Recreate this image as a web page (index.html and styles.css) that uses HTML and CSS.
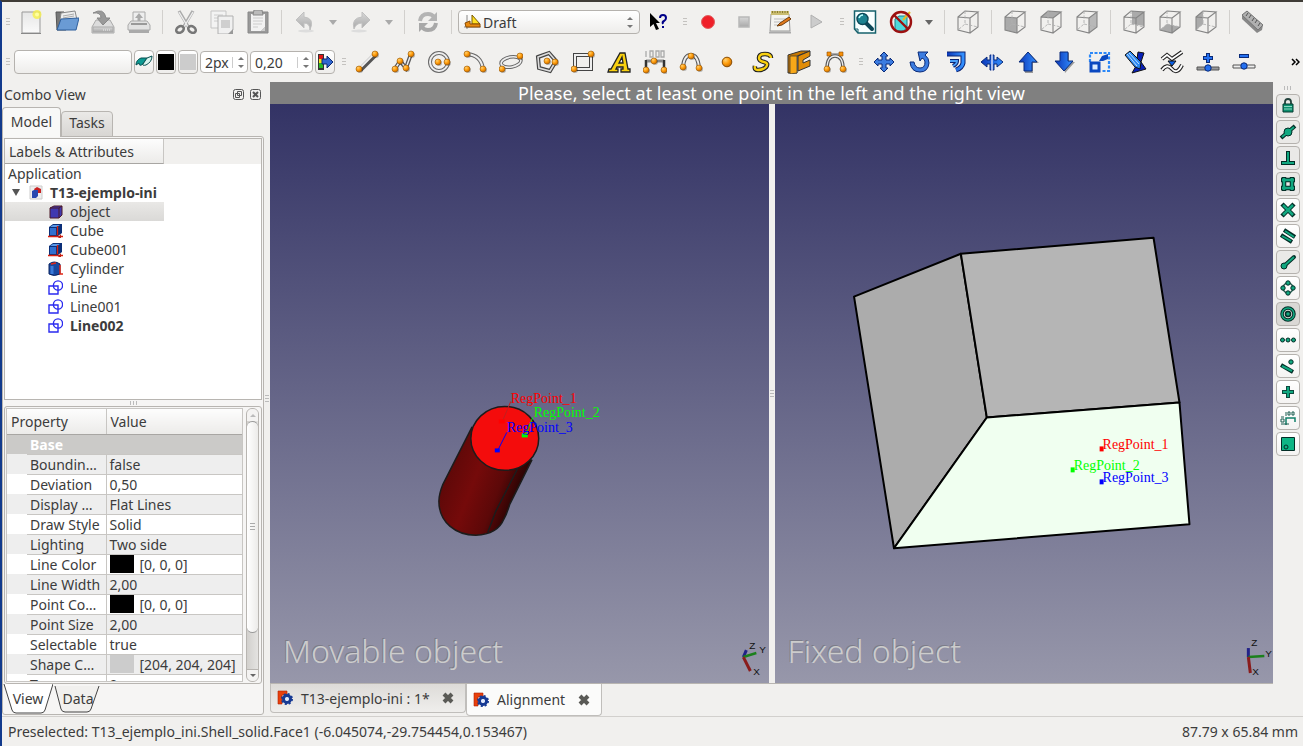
FILE: index.html
```html
<!DOCTYPE html>
<html lang="en">
<head>
<meta charset="utf-8">
<title>Alignment</title>
<link rel="stylesheet" href="styles.css">
</head>
<body>
<svg class="defs" aria-hidden="true">
  <defs>
    <radialGradient id="orange" cx=".35" cy=".3" r=".8"><stop offset="0" stop-color="#ffd070"/><stop offset=".5" stop-color="#ff9b08"/><stop offset="1" stop-color="#b86000"/></radialGradient>
    <linearGradient id="blue" x1="0" x2="1"><stop offset="0" stop-color="#0a35b8"/><stop offset="1" stop-color="#3390ff"/></linearGradient>
    <linearGradient id="grey" x1="0" x2="0" y1="0" y2="1"><stop offset="0" stop-color="#d8d8d8"/><stop offset="1" stop-color="#a8a8a8"/></linearGradient>
    <linearGradient id="paper" x1="0" x2="0" y1="0" y2="1"><stop offset="0" stop-color="#e6e6e6"/><stop offset="1" stop-color="#fafafa"/></linearGradient>
    <linearGradient id="side" x1="0" x2="1" y1="0" y2=".45"><stop offset="0" stop-color="#3a0505"/><stop offset=".2" stop-color="#5c0808"/><stop offset=".5" stop-color="#750a0a"/><stop offset=".75" stop-color="#5c0808"/><stop offset="1" stop-color="#180202"/></linearGradient>
    <g id="ball"><circle cx="1" cy="1" r="3" fill="#000" opacity=".25"/><circle r="3" fill="url(#orange)" stroke="#9a5a08" stroke-width=".6"/></g>
    <g id="wire" fill="none" stroke="#858585" stroke-width="1.1"><path d="M2 7 14 8V23L2 20ZM2 7 9 1 22 2 14 8M22 2V17L14 23"/><path d="M9 1V14L2 20M9 14 22 17" stroke-dasharray="3 1.500" stroke="#b0b0b0" stroke-width=".9"/></g>
    <g id="sketch" fill="none" stroke="#2a2af0" stroke-width="1.4"><path d="M1 6H10V14H1Z"/><circle cx="10" cy="5.500" r="4.600"/></g>
    <g id="cubeicon"><path d="M1 4 5 1H14V10L10 13H1Z" fill="#0b2f78"/><path d="M2 5H8V12H2Z" fill="#3070d0"/><path d="M2 4 5 2H12L9 4Z" fill="#5a98e8"/><path d="M9.500 3V12M0 13.500H15" stroke="#d82010" stroke-width="1.300"/><path d="M13 11V15H10Z" fill="#c02010"/></g>
    <g id="closex"><path d="M2 2 10 10M10 2 2 10" stroke="#5a5a56" stroke-width="4"/></g>
    <g id="fc"><path d="M1 1H10V5H5V14H1Z" fill="#e8400c" stroke="#b02000" stroke-width=".6"/><circle cx="10" cy="9" r="3.500" fill="none" stroke="#173a94" stroke-width="3"/><circle cx="10" cy="9" r="5" fill="none" stroke="#173a94" stroke-width="2" stroke-dasharray="2 1.930"/><circle cx="10" cy="9" r="1.700" fill="#dfe8ff"/></g>
  </defs>
</svg>

<div class="window">
  <div class="toolbar" role="toolbar" aria-label="Standard">
    <span class="grip first"></span>
    <button class="tool" aria-label="New"><svg viewBox="0 0 24 24"><path d="M3 2H21V23H3Z" fill="url(#paper)" stroke="#999"/><path d="M2 23.500H22" stroke="#888"/><circle cx="18" cy="4.500" r="4.500" fill="#f6f04a" opacity=".8"/><circle cx="18" cy="4.500" r="2" fill="#ffffa0"/></svg></button>
    <button class="tool" aria-label="Open"><svg viewBox="0 0 24 24"><path d="M1 2H9L11 4V20H2Z" fill="#777" stroke="#555"/><path d="M6 3 20 1 22 10H5Z" fill="#eee" stroke="#888"/><path d="M8 6 19 4M8 8 19 6" stroke="#aaa"/><path d="M6 9 24 8 21 20H2Z" fill="#6a9bd4" stroke="#2f5f9c"/></svg></button>
    <button class="tool" aria-label="Save"><svg viewBox="0 0 24 24"><path d="M5 10H19L23 17V23H1V17Z" fill="#dcdcdc" stroke="#aaa"/><path d="M2 17H22V22H2Z" fill="url(#grey)" stroke="#aaa"/><path d="M12 20H20" stroke="#eee" stroke-dasharray="1 1"/><path d="M2 3Q13-3 15 8H19L12 15 6 8H10Q10 2 2 3" fill="#999" stroke="#888"/></svg></button>
    <button class="tool" aria-label="Print"><svg viewBox="0 0 24 24"><path d="M6 2H18V12H6Z" fill="#eee" stroke="#aaa"/><path d="M12 3 16 8H13.500V12H10.500V8H8Z" fill="#aaa"/><path d="M4 11H20L23 15V20H1V15Z" fill="#e2e2e2" stroke="#aaa"/><path d="M4 14H20" stroke="#999" stroke-width="2"/><path d="M2 20H22V23H2Z" fill="#aaa"/></svg></button>
    <span class="sep"></span>
    <button class="tool" aria-label="Cut"><svg viewBox="0 0 24 24"><path d="M5 1 15 18M19 1 9 18" stroke="#aaa" stroke-width="3.200"/><path d="M5 2 14 17M19 2 10 17" stroke="#eee" stroke-width="1.400"/><ellipse cx="6" cy="19.500" rx="4" ry="3" fill="none" stroke="#777" stroke-width="2.600" transform="rotate(-35 6 19.500)"/><ellipse cx="18" cy="19.500" rx="4" ry="3" fill="none" stroke="#777" stroke-width="2.600" transform="rotate(35 18 19.500)"/></svg></button>
    <button class="tool" aria-label="Copy"><svg viewBox="0 0 24 24"><path d="M1 1H16V18H1Z" fill="#f3f3f3" stroke="#c5c5c5"/><path d="M4 5H13M4 8H13M4 11H8" stroke="#ccc"/><path d="M8 6H23V20L19 24H8Z" fill="#f0f0f0" stroke="#b0b0b0"/><path d="M11 10H20V18H11Z" fill="#cfcfcf"/><path d="M23 19V24H18Z" fill="#999"/></svg></button>
    <button class="tool" aria-label="Paste"><svg viewBox="0 0 24 24"><path d="M2 2H22V23H2Z" fill="#999" stroke="#888"/><path d="M5 4H19V17L15 21H5Z" fill="#f2f2f2"/><path d="M7 8H17M7 11H17M7 14H16M7 17H12" stroke="#ccc"/><path d="M8 0H16L17 5H7Z" fill="#bbb" stroke="#888"/><path d="M19 17V21H15Z" fill="#ccc"/></svg></button>
    <span class="sep"></span>
    <button class="tool" aria-label="Undo"><svg viewBox="0 0 24 24"><ellipse cx="13" cy="21" rx="8" ry="1.500" fill="#ddd"/><path d="M11 2V7Q22 8 17 20Q17 13 11 13V18L3 10Z" fill="url(#grey)" stroke="#c0c0c0"/></svg></button>
    <button class="drop" aria-label="Undo history"></button>
    <button class="tool" aria-label="Redo"><svg viewBox="0 0 24 24"><ellipse cx="10" cy="21" rx="8" ry="1.500" fill="#ddd"/><path d="M13 2V7Q2 8 5 19Q7 13 13 13V18L21 10Z" fill="url(#grey)" stroke="#c0c0c0"/></svg></button>
    <button class="drop" aria-label="Redo history"></button>
    <span class="sep"></span>
    <button class="tool" aria-label="Refresh"><svg viewBox="0 0 24 24"><path d="M4 11Q5 4 12 4Q16 4 18 7" fill="none" stroke="#b4b4b4" stroke-width="4"/><path d="M21 2V11H12Z" fill="#b4b4b4"/><path d="M20 13Q19 20 12 20Q8 20 6 17" fill="none" stroke="#a8a8a8" stroke-width="4"/><path d="M3 22V13H12Z" fill="#a8a8a8"/></svg></button>
    <span class="sep"></span>
    <div class="workbench">
      <svg viewBox="0 0 18 18"><path d="M3 2V16M0 14H17" stroke="#888"/><path d="M8 2V11H16Z" fill="#ffe020" stroke="#7a5a00"/><path d="M1 10 6 8V11H16V14H2Z" fill="#e88a10" stroke="#8a4a00"/></svg>
      <select aria-label="Workbench"><option>Draft</option></select>
      <span class="updown"></span>
    </div>
    <button class="tool" aria-label="What's this"><svg viewBox="0 0 24 24"><path d="M3 3V17L6.500 14 9 20 12 19 9 13H13Z" fill="#000"/><path d="M13 8Q13 5 16 5T19 8Q19 10 17 11T16 14M16 16V18" fill="none" stroke="#000088" stroke-width="2"/></svg></button>
    <span class="grip"></span>
    <button class="tool" aria-label="Record macro"><svg viewBox="0 0 24 24"><circle cx="12" cy="12" r="6.500" fill="#ef2029" stroke="#e06060"/></svg></button>
    <button class="tool" aria-label="Stop macro"><svg viewBox="0 0 24 24"><path d="M7 7H17V17H7Z" fill="url(#grey)" stroke="#b8b8b8" stroke-width="1.500"/></svg></button>
    <button class="tool" aria-label="Macros"><svg viewBox="0 0 24 24"><path d="M3 4H21L22 21H2Z" fill="#f4f4f0" stroke="#999"/><path d="M3 1H21V5H3Z" fill="#c9bc70"/><path d="M4 2H21" stroke="#8a7c30" stroke-dasharray="1 1.500" stroke-width="2"/><path d="M6 9H18M6 12H14M6 15H10" stroke="#bbb"/><path d="M23 9 14 15 9 16 12 13 21 7Z" fill="#e07818" stroke="#704010"/><path d="M1 22.500H23" stroke="#aaa" stroke-width="2"/></svg></button>
    <button class="tool" aria-label="Run macro"><svg viewBox="0 0 24 24"><path d="M7 5 18 12 7 18Z" fill="#ccc" stroke="#b0b0b0"/></svg></button>
    <span class="grip"></span>
    <button class="tool" aria-label="Fit all"><svg viewBox="0 0 24 24"><path d="M1.500 1H22.500V23H5L1.500 19Z" fill="#f8ffff" stroke="#16616c" stroke-width="1.500"/><path d="M2 19H5V23" fill="none" stroke="#16616c"/><path d="M12 12 19 19" stroke="#0d4858" stroke-width="4" stroke-linecap="round"/><circle cx="9.500" cy="9" r="5.500" fill="#1c8290" stroke="#0d4858" stroke-width="1.400"/><path d="M6 8Q7 5 10 5" fill="none" stroke="#bff" stroke-width="1.500"/></svg></button>
    <button class="tool" aria-label="Draw style"><svg viewBox="0 0 24 24"><path d="M6 9 10 6H18V17L15 21H6Z" fill="#4fd8dc" stroke="#168088"/><path d="M14 10 21 2" stroke="#e8b820" stroke-width="2"/><circle cx="12" cy="12" r="10" fill="none" stroke="#9c1010" stroke-width="2.400"/><path d="M5 5 19 19" stroke="#9c1010" stroke-width="2.400"/></svg></button>
    <button class="drop dark" aria-label="Draw style options"></button>
    <span class="sep"></span>
    <button class="tool" aria-label="Axonometric"><svg viewBox="0 0 24 24"><use href="#wire"/></svg></button>
    <span class="sep"></span>
    <button class="tool" aria-label="Front"><svg viewBox="0 0 24 24"><path d="M2 7 14 8V23L2 20Z" fill="#aaa"/><use href="#wire"/></svg></button>
    <button class="tool" aria-label="Top"><svg viewBox="0 0 24 24"><path d="M2 7 9 1 22 2 14 8Z" fill="#aaa"/><use href="#wire"/></svg></button>
    <button class="tool" aria-label="Right"><svg viewBox="0 0 24 24"><path d="M14 8 22 2V17L14 23Z" fill="#b8b8b8"/><use href="#wire"/></svg></button>
    <span class="sep"></span>
    <button class="tool" aria-label="Rear"><svg viewBox="0 0 24 24"><path d="M10 1 22 2V16L10 14Z" fill="#aaa"/><use href="#wire"/></svg></button>
    <button class="tool" aria-label="Bottom"><svg viewBox="0 0 24 24"><path d="M2 20 9 14 22 17 14 23Z" fill="#aaa"/><use href="#wire"/></svg></button>
    <button class="tool" aria-label="Left"><svg viewBox="0 0 24 24"><path d="M2 7 9 1V14L2 20Z" fill="#aaa"/><use href="#wire"/></svg></button>
    <span class="sep"></span>
    <button class="tool" aria-label="Measure distance"><svg viewBox="0 0 24 24"><path d="M6 1 22 15 21 20 16 23 1 9 1 5Z" fill="#888"/><path d="M6 1 22 15 17 20 1 5Z" fill="#b0b0b0" stroke="#777"/><path d="M7 3 5 6M10 5 8 8M13 8 11 11M16 10 14 13M19 13 17 16" stroke="#555"/></svg></button>
  </div>

  <div class="toolbar" role="toolbar" aria-label="Draft">
    <span class="grip first"></span>
    <div class="fields">
      <button class="btn plane" aria-label="Working plane"></button>
      <button class="btn" aria-label="Construction mode"><svg viewBox="0 0 18 18"><path d="M1 12Q1 7 6 5H12L8 11Q4 14 4 10Z" fill="#0c9a92" stroke="#064f50"/><path d="M8 11 12 5 17 3Q17 9 11 12Q7 13 8 11" fill="#d8f4ee" stroke="#064f50"/></svg></button>
      <button class="btn" aria-label="Line color"><span class="chip black"></span></button>
      <button class="btn" aria-label="Face color"><span class="chip"></span></button>
      <div class="spin narrow"><input aria-label="Line width" value="2px"><span class="updown"></span></div>
      <div class="spin"><input aria-label="Text size" value="0,20"><span class="updown"></span></div>
      <button class="btn" aria-label="Apply style"><svg viewBox="0 0 18 18"><path d="M2 1H8V17H2Z" fill="#333"/><path d="M3 2H7V6H3Z" fill="#e01818"/><path d="M3 6H7V10H3Z" fill="#f4e020"/><path d="M3 10H7V15H3Z" fill="#28b828"/><path d="M6 6H11V3L17 9 11 15V11H6Z" fill="#2f66d0" stroke="#0a2870"/></svg></button>
    </div>
    <span class="grip"></span>
    <button class="tool" aria-label="Line"><svg viewBox="0 0 24 24"><path d="M5 20 20 5" stroke="#555" stroke-width="5"/><path d="M4 19 19 4" stroke="#eee" stroke-width="2"/><use href="#ball" x="4" y="19"/><use href="#ball" x="20" y="4"/></svg></button>
    <button class="tool" aria-label="Wire"><svg viewBox="0 0 24 24"><path d="M4 19 9 11 15 18 20 4" fill="none" stroke="#555" stroke-width="4"/><path d="M4 19 9 11 15 18 20 4" fill="none" stroke="#eee" stroke-width="1.500"/><use href="#ball" x="4" y="19"/><use href="#ball" x="9" y="11"/><use href="#ball" x="15" y="18"/><use href="#ball" x="20" y="4"/></svg></button>
    <button class="tool" aria-label="Circle"><svg viewBox="0 0 24 24"><circle cx="12" cy="12" r="9" fill="none" stroke="#666" stroke-width="4"/><circle cx="12" cy="12" r="9" fill="none" stroke="#eee" stroke-width="2"/><use href="#ball" x="11" y="12"/><use href="#ball" x="20" y="12"/></svg></button>
    <button class="tool" aria-label="Arc"><svg viewBox="0 0 24 24"><path d="M4 4Q18 5 20 19" fill="none" stroke="#666" stroke-width="4"/><path d="M4 4Q18 5 20 19" fill="none" stroke="#eee" stroke-width="2"/><use href="#ball" x="4" y="4"/><use href="#ball" x="4" y="19"/><use href="#ball" x="20" y="19"/></svg></button>
    <button class="tool" aria-label="Ellipse"><svg viewBox="0 0 24 24"><ellipse cx="12" cy="12" rx="10" ry="5" fill="none" stroke="#666" stroke-width="3.600" transform="rotate(-10 12 12)"/><ellipse cx="12" cy="12" rx="10" ry="5" fill="none" stroke="#eee" stroke-width="1.600" transform="rotate(-10 12 12)"/><use href="#ball" x="3" y="19"/><use href="#ball" x="21" y="6"/></svg></button>
    <button class="tool" aria-label="Polygon"><svg viewBox="0 0 24 24"><path d="M3 7 14 3 21 11 15 21 4 18Z" fill="none" stroke="#444" stroke-width="4"/><path d="M3 7 14 3 21 11 15 21 4 18Z" fill="none" stroke="#ddd" stroke-width="1.600"/><use href="#ball" x="12" y="11"/><use href="#ball" x="20" y="12"/></svg></button>
    <button class="tool" aria-label="Rectangle"><svg viewBox="0 0 24 24"><path d="M4 5H20V19H4Z" fill="none" stroke="#444" stroke-width="4"/><path d="M4 5H20V19H4Z" fill="none" stroke="#eee" stroke-width="2"/><use href="#ball" x="3" y="19"/><use href="#ball" x="20" y="4"/></svg></button>
    <button class="tool" aria-label="Text"><svg viewBox="0 0 24 24"><path d="M2 19H4L13 3H18L21 19H23V22H14V19H16V17H10L9 19H11V22H1Z M12 13H16L15 7Z" fill="#f8d010" fill-rule="evenodd" stroke="#222" stroke-width="1.300"/></svg></button>
    <button class="tool" aria-label="Dimension"><svg viewBox="0 0 24 24"><path d="M3 10V21M21 10V21M3 11H21" stroke="#333" stroke-width="2.500"/><path d="M4 11H20" stroke="#ddd"/><path d="M3 1V7M7 1H10V7H7ZM13 1H16V7H13ZM18 1H21V7H18Z" fill="none" stroke="#aaa" stroke-width="1.300"/><use href="#ball" x="3" y="20"/><use href="#ball" x="11" y="11"/><use href="#ball" x="21" y="20"/></svg></button>
    <button class="tool" aria-label="B-spline"><svg viewBox="0 0 24 24"><path d="M4 17Q5 5 12 5T20 18" fill="none" stroke="#555" stroke-width="4"/><path d="M4 17Q5 5 12 5T20 18" fill="none" stroke="#eee" stroke-width="1.800"/><use href="#ball" x="4" y="17"/><use href="#ball" x="12" y="6"/><use href="#ball" x="20" y="18"/></svg></button>
    <button class="tool" aria-label="Point"><svg viewBox="0 0 24 24"><circle cx="12" cy="12" r="4.800" fill="url(#orange)" stroke="#8a4c00"/></svg></button>
    <button class="tool" aria-label="Shape string"><svg viewBox="0 0 24 24"><path d="M20 8Q20 4 14 4Q8 4 8 8Q8 11 13 12Q18 13 15 17Q12 20 7 20Q3 20 4 16" fill="none" stroke="#222" stroke-width="4.600"/><path d="M20 8Q20 4 14 4Q8 4 8 8Q8 11 13 12Q18 13 15 17Q12 20 7 20Q3 20 4 16" fill="none" stroke="#f8d010" stroke-width="2.400"/></svg></button>
    <button class="tool" aria-label="Facebinder"><svg viewBox="0 0 24 24"><path d="M1 5 14 1 23 1 10 6V23L1 23Z" fill="#c87800" stroke="#333"/><path d="M11 6 23 1V6L16 10V13L23 10V16L11 21Z" fill="#e08c08" stroke="#333"/><path d="M3 6H10V23L3 24Z" fill="#f8a818" stroke="#333" stroke-width=".7"/></svg></button>
    <button class="tool" aria-label="Bezier curve"><svg viewBox="0 0 24 24"><path d="M4 19Q4 6 12 6T20 19" fill="none" stroke="#555" stroke-width="3.500"/><path d="M4 19Q4 6 12 6T20 19" fill="none" stroke="#eee" stroke-width="1.300"/><path d="M6 4H18" stroke="#666"/><path d="M4 2H8V6H4ZM16 2H20V6H16Z" fill="#f89008" stroke="#8a4c00" stroke-width=".6"/><use href="#ball" x="4" y="19"/><use href="#ball" x="20" y="19"/></svg></button>
    <span class="grip"></span>
    <button class="tool" aria-label="Move"><svg viewBox="0 0 24 24"><path d="M12 2 16 6H14V10H18V8L22 12 18 16V14H14V18H16L12 22 8 18H10V14H6V16L2 12 6 8V10H10V6H8Z" fill="#3c7ce0" stroke="#0a2a78"/></svg></button>
    <button class="tool" aria-label="Rotate"><svg viewBox="0 0 24 24"><path d="M2 12H6Q7 18 12 18Q17 18 17 12Q17 9 14 8L12 11 10 2H20L17 5Q21 8 21 13Q20 22 12 22Q3 22 2 12Z" fill="#3c7ce0" stroke="#0a2a78"/></svg></button>
    <button class="tool" aria-label="Offset"><svg viewBox="0 0 24 24"><path d="M3 4H19V13Q18 18 12 20" fill="none" stroke="#0a2270" stroke-width="5"/><path d="M3 4H19V13Q18 18 12 20" fill="none" stroke="url(#blue)" stroke-width="3"/><path d="M6 11H13Q13 14 9 16" fill="none" stroke="#0a2270" stroke-width="4"/><path d="M6 11H13Q13 14 9 16" fill="none" stroke="#4aa0f8" stroke-width="1.800"/></svg></button>
    <button class="tool" aria-label="Trimex"><svg viewBox="0 0 24 24"><path d="M1 12 7 7V10H10V5H14V10H17V7L23 12 17 17V14H14V20H10V14H7V17Z" fill="url(#blue)" stroke="#0a2a78"/><path d="M12 4V21" stroke="#eef" stroke-width="1.300"/></svg></button>
    <button class="tool" aria-label="Upgrade"><svg viewBox="0 0 24 24"><path d="M13 3 23 13H17V23H9V13Z" fill="#999"/><path d="M12 2 21 12H16V21H8V12H3Z" fill="url(#blue)" stroke="#0a2a78"/></svg></button>
    <button class="tool" aria-label="Downgrade"><svg viewBox="0 0 24 24"><path d="M9 3H17V12H23L13 23Z" fill="#999"/><path d="M8 2H16V11H21L12 21 3 11H8Z" fill="url(#blue)" stroke="#0a2a78"/></svg></button>
    <button class="tool" aria-label="Scale"><svg viewBox="0 0 24 24"><path d="M2 12V3H21V21H13" fill="none" stroke="#2c88f8" stroke-width="2.200" stroke-dasharray="3 1.500"/><path d="M3 13H11V21H3Z" fill="#dcecff" stroke="#0a48c0" stroke-width="3"/><path d="M11 11 14 6 20 4 20 9 15 11Z" fill="#0a48c0"/></svg></button>
    <button class="tool" aria-label="Edit"><svg viewBox="0 0 24 24"><path d="M14 2 20 3 17 12 22 19 8 23 12 16Z" fill="#0820b8" stroke="#111"/><path d="M1 5 6 1 17 12 16 19 11 17Z" fill="#2c88f0" stroke="#111"/><path d="M3 4 13 16M5 3 15 14" stroke="#bfe0ff"/></svg></button>
    <button class="tool" aria-label="Wire to B-spline"><svg viewBox="0 0 24 24"><path d="M2 9 7 5 12 9 22 2M2 20Q7 13 12 19T22 15" fill="none" stroke="#222" stroke-width="4"/><path d="M2 9 7 5 12 9 22 2M2 20Q7 13 12 19T22 15" fill="none" stroke="#fff" stroke-width="1.800"/><path d="M8 11H16L12 16Z" fill="#0a60e8" stroke="#111"/></svg></button>
    <button class="tool" aria-label="Add point"><svg viewBox="0 0 24 24"><path d="M12 3V13M7 8H17" stroke="#0a2a78" stroke-width="4"/><path d="M12 4V12M8 8H16" stroke="#2470f0" stroke-width="2"/><path d="M1 17H23V20H1Z" fill="#999" stroke="#555"/><circle cx="12" cy="18" r="3.200" fill="#2470f0" stroke="#0a2a78"/></svg></button>
    <button class="tool" aria-label="Delete point"><svg viewBox="0 0 24 24"><path d="M7 6H17" stroke="#0a2a78" stroke-width="4"/><path d="M8 6H16" stroke="#2470f0" stroke-width="2"/><path d="M1 15H23V18H1Z" fill="#eee" stroke="#555"/><circle cx="12" cy="16" r="3.200" fill="#2470f0" stroke="#0a2a78"/></svg></button>
    <button class="more" aria-label="More tools"><svg viewBox="0 0 9 8"><path d="M1 1 4 4 1 7M5 1 8 4 5 7" fill="none" stroke="#000" stroke-width="1.500"/></svg></button>
  </div>

  <div class="main">
    <aside class="dock">
      <header class="dock-title">
        <h2>Combo View</h2>
        <button aria-label="Float"><svg viewBox="0 0 11 11"><rect x=".5" y=".5" width="10" height="10" rx="2" fill="none" stroke="#555"/><path d="M4.500 2.500H8.500V6.500H4.500ZM2.500 4.500H6.500V8.500H2.500Z" fill="none" stroke="#555"/></svg></button>
        <button aria-label="Close"><svg viewBox="0 0 11 11"><rect x=".5" y=".5" width="10" height="10" rx="2" fill="none" stroke="#555"/><path d="M3 3 8 8M8 3 3 8" stroke="#555" stroke-width="2"/></svg></button>
      </header>
      <nav class="tabs">
        <button class="tab active">Model</button>
        <button class="tab">Tasks</button>
      </nav>
      <div class="pane">
        <div class="tree">
          <div class="tree-head"><span>Labels &amp; Attributes</span></div>
          <ul>
            <li class="root">Application</li>
            <li class="doc"><span class="expander"></span><svg viewBox="0 0 15 15"><path d="M2 1H14V14H2Z" fill="#eee" stroke="#ccc"/><path d="M6 4 9 2 13 4V8H8Z" fill="#c82020"/><path d="M4 6 6 5H10V11L8 13H4Z" fill="#2848b0"/></svg>T13-ejemplo-ini</li>
            <li class="selected"><svg viewBox="0 0 15 15"><path d="M2 4 6 2H14V11L11 14H2Z" fill="#4038b0" stroke="#4a1828"/><path d="M2 4H11L14 2M11 4V14" fill="none" stroke="#4a1828"/></svg>object</li>
            <li><svg viewBox="0 0 15 15"><use href="#cubeicon"/></svg>Cube</li>
            <li><svg viewBox="0 0 15 15"><use href="#cubeicon"/></svg>Cube001</li>
            <li><svg viewBox="0 0 15 15"><path d="M1 3Q6-1 12 3V13Q6 16 1 13Z" fill="#1848a0" stroke="#0a2460"/><path d="M4 5V13" stroke="#3a7ad8" stroke-width="3"/><path d="M3 3 8 2M12 4V13H15" fill="none" stroke="#e02818" stroke-width="1.500"/></svg>Cylinder</li>
            <li><svg viewBox="0 0 15 15"><use href="#sketch"/></svg>Line</li>
            <li><svg viewBox="0 0 15 15"><use href="#sketch"/></svg>Line001</li>
            <li class="bold"><svg viewBox="0 0 15 15"><use href="#sketch"/></svg>Line002</li>
          </ul>
        </div>
        <div class="hsplit"></div>
        <div class="props">
          <div class="props-clip">
            <table>
              <colgroup><col class="c-gutter"><col class="c-name"><col></colgroup>
              <thead><tr><th colspan="2">Property</th><th>Value</th></tr></thead>
              <tbody>
                <tr class="group"><td></td><td colspan="2">Base</td></tr>
                <tr><td></td><td>Boundin…</td><td>false</td></tr>
                <tr><td></td><td>Deviation</td><td>0,50</td></tr>
                <tr><td></td><td>Display …</td><td>Flat Lines</td></tr>
                <tr><td></td><td>Draw Style</td><td>Solid</td></tr>
                <tr><td></td><td>Lighting</td><td>Two side</td></tr>
                <tr><td></td><td>Line Color</td><td><i class="swatch black"></i>[0, 0, 0]</td></tr>
                <tr><td></td><td>Line Width</td><td>2,00</td></tr>
                <tr><td></td><td>Point Co…</td><td><i class="swatch black"></i>[0, 0, 0]</td></tr>
                <tr><td></td><td>Point Size</td><td>2,00</td></tr>
                <tr><td></td><td>Selectable</td><td>true</td></tr>
                <tr><td></td><td>Shape C…</td><td><i class="swatch"></i>[204, 204, 204]</td></tr>
                <tr><td></td><td>Transpa…</td><td>0</td></tr>
              </tbody>
            </table>
          </div>
          <div class="scroll"><span class="up"></span><span class="thumb"></span><span class="down"></span></div>
        </div>
        <nav class="bottom-tabs">
          <button class="trap front"><svg viewBox="0 0 50 30" preserveAspectRatio="none"><path d="M1 0 9 26Q10 29 13 29H38Q41 29 42 26L50 0" fill="#fff" stroke="#444"/></svg><span>View</span></button>
          <button class="trap"><svg viewBox="0 0 50 30" preserveAspectRatio="none"><path d="M2 2 8 25Q9 28 12 28H34Q37 28 38 25L46 2" fill="#f1f0ee" stroke="#444"/></svg><span>Data</span></button>
        </nav>
      </div>
    </aside>
    <div class="vsplit"></div>

    <main class="center">
      <p class="message">Please, select at least one point in the left and the right view</p>
      <div class="views">
        <section class="view">
          <svg viewBox="0 -1 499 580">
            <path d="M202 323 173 380Q169 390 169 397C169 418 186 431 206 431Q228 430 234 415Q237 410 240 400L262 356Z" fill="url(#side)" stroke="#1c1c1c" stroke-width="1.500"/>
            <path d="M248 364 226 407 218 428" fill="none" stroke="#1c1c1c" stroke-width="1.500"/>
            <ellipse cx="235" cy="334" rx="34" ry="32" fill="#f40c0c" stroke="#1c1c1c" stroke-width="1.500"/>
            <path d="M241 297 233 316" stroke="#c02020"/><path d="M229 315H235V319H229Z" fill="#f00"/>
            <path d="M263 313 256 330" stroke="#0f0"/><path d="M252 329H258V333H252Z" fill="#0f0"/>
            <path d="M237 328 228 346" stroke="#00f"/><path d="M225 344H230V348H225Z" fill="#00f"/>
            <g class="point"><text x="241" y="299" fill="#f00">RegPoint_1</text><text x="264" y="313" fill="#0f0">RegPoint_2</text><text x="237" y="328" fill="#00f">RegPoint_3</text></g>
            <path d="M474 553 477 546" stroke="#222288" stroke-width="3"/><path d="M474 553 487 549" stroke="#1c801c" stroke-width="2.500"/><path d="M474 553 481 567" stroke="#8a1c1c" stroke-width="3"/>
            <g class="axis"><text x="480" y="545">Z</text><text x="490" y="549">Y</text><text x="484" y="571">X</text></g>
          </svg>
          <h3>Movable object</h3>
        </section>
        <section class="view">
          <svg viewBox="0 -1 499 580">
            <g stroke="#000" stroke-width="2" stroke-linejoin="round">
              <path d="M79 192 186 149 212 313 119 444Z" fill="#acacac"/>
              <path d="M186 149 379 133 405 298 212 313Z" fill="#b5b5b5"/>
              <path d="M212 313 405 298 415 420 119 444Z" fill="#f0fff0"/>
            </g>
            <path d="M325 342H329V347H325Z" fill="#f00"/><path d="M296 363H300V368H296Z" fill="#0f0"/><path d="M325 375H329V380H325Z" fill="#00f"/>
            <g class="point"><text x="328" y="345" fill="#f00">RegPoint_1</text><text x="299" y="366" fill="#0f0">RegPoint_2</text><text x="328" y="378" fill="#00f">RegPoint_3</text></g>
            <path d="M474 553V544" stroke="#222288" stroke-width="3"/><path d="M474 553 490 552" stroke="#1c801c" stroke-width="2.500"/><path d="M474 553 476 569" stroke="#8a1c1c" stroke-width="3"/>
            <g class="axis"><text x="477" y="542">Z</text><text x="491" y="553">Y</text><text x="478" y="571">X</text></g>
          </svg>
          <h3>Fixed object</h3>
        </section>
      </div>
      <nav class="doc-tabs">
        <div class="doc-tab"><svg viewBox="0 0 16 16"><use href="#fc"/></svg><span>T13-ejemplo-ini : 1*</span><button aria-label="Close T13-ejemplo-ini"><svg viewBox="0 0 12 12"><use href="#closex"/></svg></button></div>
        <div class="doc-tab active"><svg viewBox="0 0 16 16"><use href="#fc"/></svg><span>Alignment</span><button aria-label="Close Alignment"><svg viewBox="0 0 12 12"><use href="#closex"/></svg></button></div>
      </nav>
    </main>

    <div class="snaps" role="toolbar" aria-label="Draft snap">
      <span class="hgrip"></span>
      <button class="on" aria-label="Snap lock"><svg viewBox="0 0 18 18"><path d="M6 8V5Q6 2 9 2T12 5V8" fill="none" stroke="#24433c" stroke-width="1.800"/><path d="M4 7H14V15H4Z" fill="#0f9070" stroke="#053c30"/><path d="M5 9.500H13M5 12H13" stroke="#8ad8c0"/></svg></button>
      <button class="on" aria-label="Midpoint"><svg viewBox="0 0 18 18"><path d="M2 15 16 3" stroke="#032d26" stroke-width="4"/><circle cx="9" cy="9" r="4" fill="#11a880" stroke="#032d26"/><path d="M3 14 15 4" stroke="#11a880" stroke-width="2"/></svg></button>
      <button class="on" aria-label="Perpendicular"><svg viewBox="0 0 18 18"><path d="M9 2V14M2 14H16" stroke="#032d26" stroke-width="4"/><path d="M9 3V14M3 14H15" stroke="#11a880" stroke-width="2"/></svg></button>
      <button class="on" aria-label="Grid"><svg viewBox="0 0 18 18"><path d="M5 2V16M13 2V16M2 5H16M2 13H16" stroke="#032d26" stroke-width="4.500"/><path d="M5 3V15M13 3V15M3 5H15M3 13H15" stroke="#11a880" stroke-width="2.500"/></svg></button>
      <button aria-label="Intersection"><svg viewBox="0 0 18 18"><path d="M3 3 15 15M15 3 3 15" stroke="#032d26" stroke-width="4.500"/><path d="M4 4 14 14M14 4 4 14" stroke="#11a880" stroke-width="2.500"/></svg></button>
      <button aria-label="Parallel"><svg viewBox="0 0 18 18"><path d="M5 3 16 10M2 8 13 15" stroke="#032d26" stroke-width="4"/><path d="M6 4 15 10M3 9 12 14" stroke="#11a880" stroke-width="2"/></svg></button>
      <button class="on" aria-label="Endpoint"><svg viewBox="0 0 18 18"><path d="M5 13 15 4" stroke="#032d26" stroke-width="4" stroke-linecap="round"/><circle cx="5" cy="13" r="3" fill="#11a880" stroke="#032d26"/><path d="M5 13 15 4" stroke="#11a880" stroke-width="2"/></svg></button>
      <button aria-label="Angle"><svg viewBox="0 0 18 18"><circle cx="9" cy="9" r="5" fill="none" stroke="#245c50" stroke-width="1.500"/><g fill="#11a880" stroke="#032d26"><circle cx="9" cy="4" r="2.200"/><circle cx="9" cy="14" r="2.200"/><circle cx="4" cy="9" r="2.200"/><circle cx="14" cy="9" r="2.200"/></g></svg></button>
      <button class="on deep" aria-label="Center"><svg viewBox="0 0 18 18"><g fill="none" stroke="#032d26"><circle cx="9" cy="9" r="6" stroke-width="3.500"/><circle cx="9" cy="9" r="6" stroke="#11a880" stroke-width="1.600"/><circle cx="9" cy="9" r="2.500" fill="#11a880" stroke-width="1.500"/></g></svg></button>
      <button aria-label="Extension"><svg viewBox="0 0 18 18"><g fill="#11a880" stroke="#032d26"><circle cx="3.500" cy="9" r="2"/><circle cx="9" cy="9" r="2"/><circle cx="14.500" cy="9" r="2"/></g></svg></button>
      <button aria-label="Near"><svg viewBox="0 0 18 18"><path d="M2 8 14 15" stroke="#032d26" stroke-width="4"/><path d="M3 9 13 14" stroke="#11a880" stroke-width="2"/><circle cx="12" cy="5" r="2.200" fill="#11a880" stroke="#032d26"/></svg></button>
      <button aria-label="Ortho"><svg viewBox="0 0 18 18"><path d="M9 3V15M3 9H15" stroke="#0c4a3e" stroke-width="4"/><path d="M9 4V14M4 9H14" stroke="#11a880" stroke-width="2"/></svg></button>
      <button aria-label="Dimensions"><svg viewBox="0 0 18 18"><path d="M7 16V9H16V13" fill="none" stroke="#11806a" stroke-width="1.500"/><path d="M7 3V7M9 3H11V6H9ZM13 3H15V6H13ZM2 8H5M2 10V13H5V10ZM2 15H10" fill="none" stroke="#1c5c50"/></svg></button>
      <button aria-label="Working plane"><svg viewBox="0 0 18 18"><path d="M2.500 2.500H15.500V15.500H2.500Z" fill="#0fb585" stroke="#032d26"/><circle cx="7" cy="12" r="2" fill="none" stroke="#032d26"/></svg></button>
    </div>
  </div>

  <footer class="status">
    <span>Preselected: T13_ejemplo_ini.Shell_solid.Face1 (-6.045074,-29.754454,0.153467)</span>
    <span>87.79 x 65.84 mm</span>
  </footer>
</div>
</body>
</html>
```
FILE: styles.css
```css
* { box-sizing: border-box; }

body {
  margin: 0;
  background: #f1f0ee;
  color: #3c3c3c;
  font: 14px/19px "Noto Sans", "Open Sans", sans-serif;
}

button, input, select {
  font: inherit;
  color: inherit;
  margin: 0;
  padding: 0;
  border: 0;
  background: none;
}

h2, h3, p, ul { margin: 0; padding: 0; font-size: inherit; font-weight: 400; list-style: none; }

.defs { position: absolute; width: 0; height: 0; }

.window {
  display: flex;
  flex-direction: column;
  height: 100vh;
  border-top: 2px solid #3f3c37;
  border-left: 2px solid #123a8c;
}

/* Toolbars */
.toolbar { display: flex; align-items: center; height: 40px; flex: none; }
.tool { width: 36px; height: 36px; flex: none; display: flex; align-items: center; justify-content: center; }
.tool svg { width: 24px; height: 24px; }
.sep { width: 11px; height: 24px; flex: none; background: linear-gradient(#d2d0cd, #d2d0cd) center / 1px 100% no-repeat; }
.grip { width: 13px; height: 8px; flex: none; background: repeating-linear-gradient(#c4c2bf 0 1px, transparent 1px 3px) 6px 0 / 4px 100% no-repeat; }
.grip.first { width: 11px; background-position: 4px 0; }
.drop { width: 20px; height: 24px; flex: none; display: flex; align-items: center; justify-content: center; }
.drop::after { content: ""; border: 4px solid transparent; border-top: 5px solid #aaa; border-bottom: 0; }
.drop.dark::after { border-top-color: #666; }
.more { margin: 0 3px 0 auto; width: 9px; height: 24px; display: flex; align-items: center; }
.more svg { width: 9px; height: 8px; }

.workbench {
  display: flex;
  align-items: center;
  width: 182px;
  height: 24px;
  margin: 0 1px;
  padding: 0 6px 0 5px;
  border: 1px solid #b5b2ae;
  border-radius: 4px;
  background: linear-gradient(#fff, #eeedeb);
}
.workbench svg { width: 18px; height: 18px; }
.workbench select { flex: 1; appearance: none; padding-left: 1px; outline: 0; }

.updown { width: 6px; display: flex; flex-direction: column; gap: 5px; flex: none; }
.updown::before, .updown::after { content: ""; border: 3px solid transparent; }
.updown::before { border-bottom-color: #777; border-top: 0; }
.updown::after { border-top-color: #777; border-bottom: 0; }

.fields { display: flex; gap: 2px; margin: 0 1px; }
.btn {
  width: 20px;
  height: 24px;
  display: flex;
  align-items: center;
  justify-content: center;
  border: 1px solid #b5b2ae;
  border-radius: 4px;
  background: linear-gradient(#fff, #eeedeb);
}
.btn svg { width: 18px; height: 18px; }
.plane { width: 118px; }
.chip { width: 16px; height: 16px; background: #ccc; }
.chip.black { background: #000; }
.spin {
  display: flex;
  align-items: center;
  width: 63px;
  height: 22px;
  margin-top: 1px;
  padding-right: 4px;
  border: 1px solid #b5b2ae;
  border-radius: 4px;
  background: #fff;
}
.spin.narrow { width: 48px; }
.spin input { flex: 1; width: 0; min-width: 0; padding-left: 4px; outline: 0; }
.spin .updown { border-left: 1px solid #ccc; width: 11px; padding-left: 5px; }

/* Combo view */
.main { flex: 1; min-height: 0; display: flex; }
.dock { width: 262px; flex: none; display: flex; flex-direction: column; }
.dock-title { display: flex; align-items: center; gap: 6px; height: 25px; padding: 0 3px 0 2px; }
.dock-title h2 { flex: 1; }
.dock-title button { width: 11px; height: 11px; display: flex; }
.dock-title button svg { width: 11px; height: 11px; }
.tabs { display: flex; align-items: flex-end; height: 30px; position: relative; margin-bottom: -1px; }
.tab { height: 26px; width: 52px; padding-bottom: 3px; border: 1px solid #b8b5b1; border-radius: 4px 4px 0 0; background: linear-gradient(#eae9e7, #d8d6d3); }
.tab.active { width: 59px; height: 30px; background: #f8f8f7; border-bottom: 0; }
.pane { flex: 1; min-height: 0; display: flex; flex-direction: column; border: 1px solid #b8b5b1; border-radius: 0 3px 3px 3px; background: #f6f5f4; margin-bottom: 1px; }
.tree { flex: none; height: 262px; margin: 1px 1px 0; border: 1px solid #b8b5b1; background: #fff; }
.tree-head { height: 25px; background: #f1f0ee; }
.tree-head span { display: block; width: 159px; height: 25px; padding: 3px 4px; border-right: 1px solid #c8c6c3; border-bottom: 1px solid #a8a6a3; background: linear-gradient(#fdfdfd, #ecebe9); }
.tree li { display: flex; align-items: center; height: 19px; width: 159px; padding-left: 43px; gap: 7px; white-space: nowrap; }
.tree li svg { width: 15px; height: 15px; flex: none; }
.tree .root { padding-left: 3px; }
.tree .doc { padding-left: 6px; font-weight: 700; }
.tree .bold { font-weight: 700; }
.tree .selected { background: linear-gradient(#e9e8e6, #dad9d7); }
.expander { width: 10px; display: flex; justify-content: center; }
.expander::after { content: ""; border: 4px solid transparent; border-top: 7px solid #555; border-bottom: 0; }

.hsplit { flex: none; height: 6px; background: repeating-linear-gradient(90deg, #bbb 0 1px, transparent 1px 3px) center / 7px 4px no-repeat; }
.props { flex: 1; min-height: 0; display: flex; gap: 3px; margin: 0 1px; padding: 1px 2px 1px 1px; border: 1px solid #b8b5b1; border-radius: 3px; }
.props-clip { flex: 1; overflow: hidden; border: 1px solid #c8c6c3; background: #fff; }
table { width: 100%; border-collapse: collapse; table-layout: fixed; }
.c-gutter { width: 20px; }
.c-name { width: 79px; }
th { height: 25px; padding: 0 4px; text-align: left; font-weight: 400; background: linear-gradient(#fdfdfd, #ecebe9); border-bottom: 1px solid #a8a6a3; }
th + th, td:nth-child(3) { border-left: 1px solid #c8c6c3; }
td { height: 20px; padding: 0 3px; line-height: 19px; white-space: nowrap; overflow: hidden; border-bottom: 1px solid #c8c6c3; }
td:first-child { border-bottom: 0; }
tbody tr:nth-child(even) { background: #eee; }
tbody tr.group { background: #cbcac8; color: #fff; font-weight: 700; }
.swatch { float: left; width: 24px; height: 18px; margin-right: 6px; background: #ccc; }
.swatch.black { background: #000; }
.scroll { width: 13px; display: flex; flex-direction: column; border: 1px solid #b8b5b1; border-radius: 6px; background: linear-gradient(90deg, #d2d0cd, #e4e3e1); overflow: hidden; }
.scroll .up, .scroll .down { flex: none; height: 12px; background: #f4f3f2; display: flex; align-items: center; justify-content: center; }
.scroll .up::after, .scroll .down::after { content: ""; border: 3px solid transparent; }
.scroll .up::after { border-bottom-color: #bbb; border-top: 0; }
.scroll .down::after { border-top-color: #666; border-bottom: 0; }
.thumb { flex: 1; position: relative; border: solid #999; border-width: 1px 0; border-radius: 6px; background: linear-gradient(90deg, #fff, #ecebe9); }
.thumb::after { content: ""; position: absolute; left: 3px; top: 50%; width: 5px; height: 8px; margin-top: -4px; background: repeating-linear-gradient(#aaa 0 1px, transparent 1px 3px); }
.scroll .down { margin-top: 36px; border-top: 1px solid #b8b5b1; }

.bottom-tabs { flex: none; display: flex; height: 30px; }
.trap { position: relative; width: 50px; height: 30px; padding-bottom: 2px; }
.trap.front { z-index: 1; }
.trap svg { position: absolute; inset: 0; width: 50px; height: 30px; }
.trap span { position: relative; }
.vsplit { width: 6px; flex: none; background: repeating-linear-gradient(#bbb 0 1px, transparent 1px 3px) center / 4px 8px no-repeat; }

/* 3D views */
.center { flex: 1; min-width: 0; display: flex; flex-direction: column; }
.message { height: 22px; flex: none; background: #808080; color: #fff; font-size: 18px; line-height: 22px; text-align: center; }
.views { flex: 1; min-height: 0; display: grid; grid-template-columns: 1fr 1fr; gap: 6px; border-bottom: 1px solid #b8b5b1; background: repeating-linear-gradient(#bbb 0 1px, #f1f0ee 1px 3px) center / 4px 8px no-repeat; }
.view { position: relative; min-width: 0; min-height: 0; background: linear-gradient(#333365, #9797aa); }
.view svg { position: absolute; inset: 0; width: 100%; height: 100%; }
.view h3 { position: absolute; left: 13px; bottom: 12px; font: 300 32px/40px "Noto Sans", "Open Sans", sans-serif; color: #ccc; text-shadow: -1px -1px 0 #7c7c88; }
.point { font: 14px "Liberation Serif", serif; }
.axis { font: 10px "Liberation Sans", sans-serif; fill: #111; }

.doc-tabs { flex: none; display: flex; align-items: flex-start; height: 32px; }
.doc-tab { display: flex; align-items: center; gap: 8px; height: 29px; width: 196px; padding: 0 11px 0 6px; border: 1px solid #c0bebb; border-top: 0; border-radius: 0 0 4px 4px; background: linear-gradient(#dddbd8, #efeeec); }
.doc-tab.active { width: 136px; height: 32px; background: #fbfbfa; }
.doc-tab > svg { width: 16px; height: 16px; flex: none; }
.doc-tab span { flex: 1; white-space: nowrap; }
.doc-tab button { display: flex; }
.doc-tab button svg { width: 12px; height: 12px; }

.snaps { width: 30px; flex: none; display: flex; flex-direction: column; align-items: center; gap: 2px; padding-top: 4px; }
.hgrip { width: 8px; height: 4px; margin-bottom: 2px; background: repeating-linear-gradient(90deg, #bbb 0 1px, transparent 1px 3px); }
.snaps button { width: 24px; height: 24px; display: flex; align-items: center; justify-content: center; border: 1px solid #b5b2ae; border-radius: 4px; background: linear-gradient(#fff, #f4f3f2); }
.snaps .on { background: #eae9e7; }
.snaps .deep { background: #dad8d5; }
.snaps svg { width: 18px; height: 18px; }

.status { flex: none; display: flex; justify-content: space-between; align-items: center; height: 30px; padding: 0 5px 0 6px; border-top: 1px solid #d2d0cd; }
```
